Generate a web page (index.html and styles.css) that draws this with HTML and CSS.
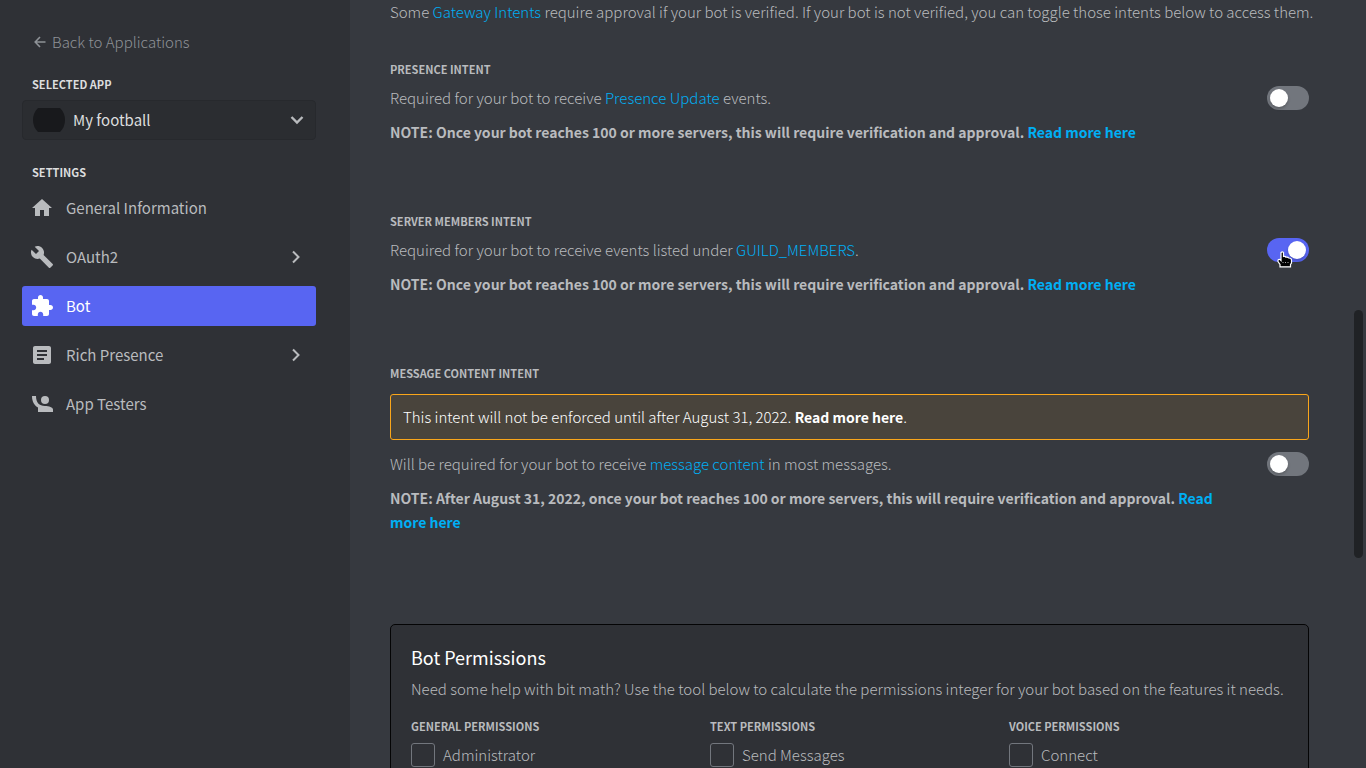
FILE: index.html
```html
<!DOCTYPE html>
<html lang="en">
<head>
<meta charset="utf-8">
<meta name="viewport" content="width=device-width, initial-scale=1">
<title>Bot settings</title>
<link rel="stylesheet" href="styles.css">
</head>
<body>
<div class="app">
  <aside class="sidebar">
    <a class="back" href="#">
      <svg class="back-icon" viewBox="0 0 12 12" aria-hidden="true"><path d="M6 1 1.200 6 6 11M1.200 6H11.500" fill="none" stroke="currentColor" stroke-width="1.600"/></svg>
      Back to Applications
    </a>
    <label class="side-title" for="selected-app">Selected App</label>
    <div class="app-picker">
      <select class="app-select" id="selected-app"><option>My football</option></select>
      <svg class="avatar" viewBox="0 0 32 24" aria-hidden="true"><path d="M5 0H27Q32 5 32 12T27 24H5Q0 19 0 12T5 0Z" fill="#18191c"/></svg>
      <svg class="picker-arrow" viewBox="0 0 14 14" aria-hidden="true"><path d="M1.500 4 7 9.500 12.500 4" fill="none" stroke="currentColor" stroke-width="2.400"/></svg>
    </div>
    <h2 class="side-title">Settings</h2>
    <nav class="nav">
      <a class="nav-item" href="#">
        <svg class="nav-icon" viewBox="0 0 24 24" aria-hidden="true"><path d="M10 20v-6h4v6h5v-8h3L12 3 2 12h3v8z"/></svg>
        <span class="nav-label">General Information</span>
      </a>
      <a class="nav-item" href="#">
        <svg class="nav-icon" viewBox="0 0 24 24" aria-hidden="true"><path d="M22.700 19l-9.100-9.100c.9-2.300.4-5-1.500-6.900-2-2-5-2.400-7.400-1.300L9 6 6 9 1.600 4.700C.4 7.100.9 10.100 2.900 12.100c1.900 1.900 4.600 2.400 6.900 1.500l9.100 9.100c.4.4 1 .4 1.400 0l2.300-2.300c.5-.4.5-1.100.1-1.400z"/></svg>
        <span class="nav-label">OAuth2</span>
        <svg class="nav-arrow" viewBox="0 0 14 14" aria-hidden="true"><path d="M4 1.500 9.500 7 4 12.500"/></svg>
      </a>
      <a class="nav-item active" href="#" aria-current="page">
        <svg class="nav-icon" viewBox="0 0 24 24" aria-hidden="true"><path d="M20.500 11H19V7c0-1.100-.9-2-2-2h-4V3.500C13 2.120 11.880 1 10.500 1S8 2.120 8 3.500V5H4c-1.100 0-1.990.9-1.990 2v3.800H3.500c1.490 0 2.700 1.210 2.700 2.700s-1.210 2.700-2.700 2.700H2V20c0 1.100.9 2 2 2h3.800v-1.500c0-1.490 1.210-2.700 2.700-2.700 1.490 0 2.700 1.210 2.700 2.700V22H17c1.100 0 2-.9 2-2v-4h1.500c1.380 0 2.500-1.120 2.500-2.500S21.880 11 20.500 11z"/></svg>
        <span class="nav-label">Bot</span>
      </a>
      <a class="nav-item" href="#">
        <svg class="nav-icon" viewBox="0 0 24 24" aria-hidden="true"><path d="M19 3H5c-1.100 0-2 .9-2 2v14c0 1.100.9 2 2 2h14c1.100 0 2-.9 2-2V5c0-1.100-.9-2-2-2zm-5 14H7v-2h7v2zm3-4H7v-2h10v2zm0-4H7V7h10v2z"/></svg>
        <span class="nav-label">Rich Presence</span>
        <svg class="nav-arrow" viewBox="0 0 14 14" aria-hidden="true"><path d="M4 1.500 9.500 7 4 12.500"/></svg>
      </a>
      <a class="nav-item" href="#">
        <svg class="nav-icon" viewBox="0 0 24 24" aria-hidden="true"><circle cx="15" cy="8" r="4"/><path d="M2 4C2 10 4.500 13.500 8 15.500V20H23V17.500C23 15.500 19 14 15 14C9 14 6 10.500 6 4Z"/></svg>
        <span class="nav-label">App Testers</span>
      </a>
    </nav>
  </aside>

  <main class="main">
    <p class="text intro">Some <a href="#">Gateway Intents</a> require approval if your bot is verified. If your bot is not verified, you can toggle those intents below to access them.</p>

    <section class="intent">
      <h3 class="title" id="presence">Presence Intent</h3>
      <div class="row">
        <div class="copy">
          <p class="text">Required for your bot to receive <a href="#">Presence Update</a> events.</p>
          <p class="note">NOTE: Once your bot reaches 100 or more servers, this will require verification and approval. <a href="#">Read more here</a></p>
        </div>
        <div class="switch"><input class="toggle" type="checkbox" role="switch" aria-labelledby="presence"></div>
      </div>
    </section>

    <section class="intent">
      <h3 class="title" id="members">Server Members Intent</h3>
      <div class="row">
        <div class="copy">
          <p class="text">Required for your bot to receive events listed under <a href="#">GUILD_MEMBERS</a>.</p>
          <p class="note">NOTE: Once your bot reaches 100 or more servers, this will require verification and approval. <a href="#">Read more here</a></p>
        </div>
        <div class="switch">
          <input class="toggle" type="checkbox" role="switch" aria-labelledby="members" checked>
          <svg class="pointer" viewBox="0 0 16 17" aria-hidden="true"><path d="M4 1.500Q5.500 .2 6.500 1.500V5.500Q8.500 5 9 6.200Q11 5.800 11.700 7Q14.500 7 14.500 9V12L13.500 13.500V15.800H3V13.500L1 10.500Q.6 8 3 8.500L4 9.500Z" fill="#000" stroke="#fff" stroke-width="1.200"/><path d="M6 11v1M8.500 11v1M11 11v1" stroke="#aaa"/></svg>
        </div>
      </div>
    </section>

    <section class="intent">
      <h3 class="title" id="content">Message Content Intent</h3>
      <p class="banner">This intent will not be enforced until after August 31, 2022. <a href="#">Read more here</a>.</p>
      <div class="row">
        <div class="copy">
          <p class="text">Will be required for your bot to receive <a href="#">message content</a> in most messages.</p>
          <p class="note">NOTE: After August 31, 2022, once your bot reaches 100 or more servers, this will require verification and approval. <a href="#">Read more here</a></p>
        </div>
        <div class="switch"><input class="toggle" type="checkbox" role="switch" aria-labelledby="content"></div>
      </div>
    </section>

    <section class="card">
      <h2 class="card-title">Bot Permissions</h2>
      <p class="text">Need some help with bit math? Use the tool below to calculate the permissions integer for your bot based on the features it needs.</p>
      <div class="columns">
        <div class="column">
          <h3 class="title">General Permissions</h3>
          <label class="check"><input class="box" type="checkbox">Administrator</label>
        </div>
        <div class="column">
          <h3 class="title">Text Permissions</h3>
          <label class="check"><input class="box" type="checkbox">Send Messages</label>
        </div>
        <div class="column">
          <h3 class="title">Voice Permissions</h3>
          <label class="check"><input class="box" type="checkbox">Connect</label>
        </div>
      </div>
    </section>
    <div class="scroll-thumb"></div>
  </main>
</div>
</body>
</html>
```

FILE: styles.css
```css
* { box-sizing: border-box; }
body, h2, h3, p { margin: 0; }
body {
  background: #36393f;
  color: #b9bbbe;
  font-family: "Noto Sans CJK SC", "Open Sans", sans-serif;
  font-size: 15px;
  font-weight: 300;
  line-height: 24px;
}
a { color: #00aff4; text-decoration: none; }

.app { display: flex; height: 100vh; overflow: hidden; }

.sidebar {
  flex: 0 0 350px;
  padding: 30px 34px 0 22px;
  background: #2f3136;
}
.back { display: flex; align-items: center; gap: 6px; padding-left: 12px; color: #8e9297; }
.back-icon { width: 12px; height: 12px; }
.side-title {
  display: block;
  margin-top: 24px;
  padding-left: 10px;
  color: #dcddde;
  font-size: 11px;
  font-weight: 700;
  line-height: 16px;
  text-transform: uppercase;
}
.back + .side-title { margin-top: 22px; }
.app-picker { position: relative; margin-top: 8px; }
.app-select {
  display: block;
  width: 100%;
  height: 40px;
  padding: 0 40px 0 50px;
  appearance: none;
  background: #2b2d31;
  border: 1px solid #27292d;
  border-radius: 4px;
  color: #dcddde;
  font: inherit;
  font-weight: 400;
}
.avatar { position: absolute; top: 8px; left: 11px; width: 32px; height: 24px; pointer-events: none; }
.picker-arrow { position: absolute; top: 13px; right: 12px; width: 14px; height: 14px; pointer-events: none; }
.nav { display: flex; flex-direction: column; gap: 9px; margin-top: 8px; font-weight: 400; }
.nav-item {
  display: flex;
  align-items: center;
  height: 40px;
  padding: 0 13px 0 8px;
  border-radius: 3px;
  color: #b9bbbe;
}
.nav-item.active { background: #5865f2; color: #fff; }
.nav-icon { width: 24px; height: 24px; fill: currentColor; }
.nav-label { flex: 1; padding-left: 12px; }
.nav-arrow { width: 14px; height: 14px; fill: none; stroke: currentColor; stroke-width: 2; }

.main { position: relative; flex: 1; min-width: 0; padding: 0 57px 0 40px; }
.intro { white-space: nowrap; }
.title { font-size: 11px; font-weight: 700; line-height: 16px; text-transform: uppercase; }
.intent { margin-bottom: 69px; }
.intro + .intent { margin-top: 37px; }
.intent .title { margin-bottom: 9px; }
.row { display: flex; gap: 20px; }
.copy { flex: 1; }
.note { margin-top: 10px; font-size: 14px; font-weight: 700; }
.intent .banner {
  margin: 13px 0 12px;
  padding: 10px 12px;
  background: #49443c;
  border: 1px solid #faa61a;
  border-radius: 3px;
  color: #fff;
}
.banner a { color: #fff; font-size: 14px; font-weight: 700; }

.switch { position: relative; height: 24px; }
.toggle {
  display: block;
  width: 42px;
  height: 24px;
  margin: 0;
  padding: 3px;
  appearance: none;
  background: #72767d;
  border-radius: 12px;
}
.toggle::before {
  content: "";
  display: block;
  width: 18px;
  height: 18px;
  background: #fff;
  border-radius: 50%;
  box-shadow: 0 2px 3px rgba(0, 0, 0, .2);
}
.toggle:checked { background: #5865f2; }
.toggle:checked::before { margin-left: auto; }
.pointer { position: absolute; top: 13px; left: 10px; width: 16px; height: 17px; }

.card {
  margin-top: 90px;
  padding: 20px;
  background: #2f3136;
  border: 1px solid #040405;
  border-radius: 5px;
}
.card-title { margin-bottom: 8px; color: #fff; font-size: 18px; font-weight: 400; }
.columns { display: grid; grid-template-columns: repeat(3, 1fr); gap: 20px; margin-top: 17px; }
.check { display: flex; align-items: center; gap: 8px; margin-top: 9px; }
.box {
  width: 24px;
  height: 24px;
  margin: 0;
  appearance: none;
  border: 1px solid #72767d;
  border-radius: 3px;
}
.scroll-thumb {
  position: absolute;
  top: 310px;
  right: 3px;
  width: 9px;
  height: 248px;
  background: #202225;
  border-radius: 5px;
}
```
